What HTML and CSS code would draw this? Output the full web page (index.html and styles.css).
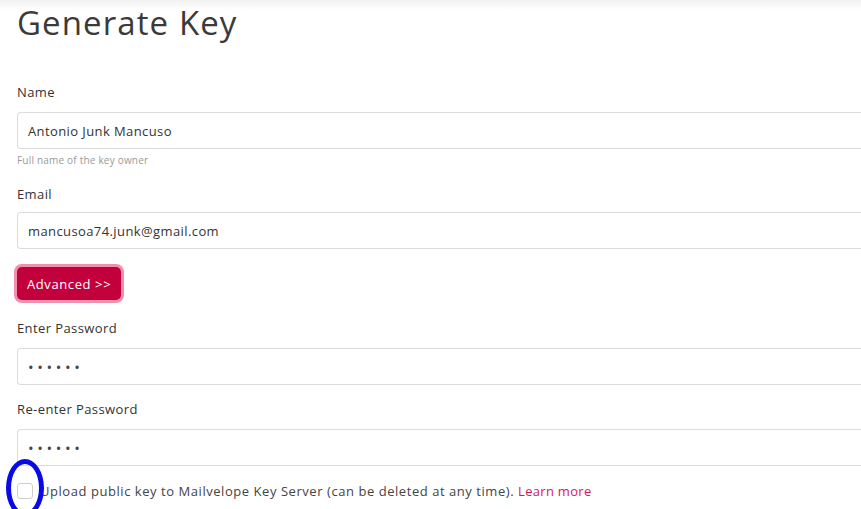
FILE: index.html
```html
<!DOCTYPE html>
<html>
<head>
<meta charset="utf-8">
<link rel="stylesheet" href="styles.css">
</head>
<body>
<div class="topshade"></div>
<main class="page">
  <h1 class="title">Generate Key</h1>
  <div class="field first">
    <label class="label">Name</label>
    <div class="input">Antonio Junk Mancuso</div>
    <div class="help">Full name of the key owner</div>
  </div>
  <div class="field email">
    <label class="label">Email</label>
    <div class="input">mancusoa74.junk@gmail.com</div>
  </div>
  <button class="btn">Advanced &gt;&gt;</button>
  <div class="field pw">
    <label class="label">Enter Password</label>
    <div class="input dots">••••••</div>
  </div>
  <div class="field pw2">
    <label class="label">Re-enter Password</label>
    <div class="input dots">••••••</div>
  </div>
  <div class="check-row">
    <span class="checkbox"></span>
    <span class="check-text">Upload public key to Mailvelope Key Server (can be deleted at any time). <a class="link">Learn more</a></span>
    <span class="annot"></span>
  </div>
</main>
</body>
</html>
```
FILE: styles.css
```css
html, body {
  margin: 0;
  padding: 0;
  background: #fff;
  overflow: hidden;
  width: 861px;
  height: 509px;
}
body {
  font-family: "Open Sans", "Liberation Sans", sans-serif;
  color: #333;
  position: relative;
}
.topshade {
  position: absolute;
  left: 0; top: 0; right: 0;
  height: 10px;
  background: linear-gradient(#f2f2f2, #fff);
}
.page {
  position: relative;
  padding-left: 17px;
}
.title {
  margin: 0;
  font-size: 33px;
  font-weight: 400;
  line-height: 46px;
  color: #3a3a3a;
  letter-spacing: 1.1px;
}
.field {
  display: flex;
  flex-direction: column;
}
.first { margin-top: 37px; }
.label {
  font-size: 13px;
  line-height: 18px;
  color: #333;
  letter-spacing: 0.4px;
  margin-bottom: 11px;
}
.email .label { margin-bottom: 9px; }
.input {
  box-sizing: border-box;
  height: 37px;
  border: 1px solid #dcdcdc;
  border-right: none;
  border-radius: 4px 0 0 4px;
  padding: 0 10px;
  display: flex;
  align-items: center;
  font-size: 13px;
  letter-spacing: 0.4px;
  color: #333;
  margin-bottom: 9px;
}
.help {
  font-size: 10px;
  color: #999;
  line-height: 14px;
  letter-spacing: 0.2px;
  margin-top: -5px;
  margin-bottom: 18px;
}
.btn {
  display: block;
  margin-top: 9px;
  height: 33px;
  padding: 0 10px;
  background: #c1003c;
  color: #fff;
  border: none;
  border-radius: 5px;
  box-shadow: 0 0 0 3px #f08fae;
  font-family: inherit;
  font-size: 13px;
  font-weight: 500;
  letter-spacing: 0.6px;
}
.pw { margin-top: 19px; }
.pw .input { margin-bottom: 15px; }
.pw2 .input { margin-bottom: 16px; }
.dots {
  font-size: 15px;
  letter-spacing: 3.6px;
  color: #444;
  padding-left: 10px;
}
.check-row {
  position: relative;
  display: flex;
  align-items: center;
  height: 18px;
}
.checkbox {
  width: 14px;
  height: 14px;
  border: 1px solid #cfcfcf;
  border-radius: 3px;
  margin-right: 7px;
  background: #fff;
}
.check-text {
  font-size: 13px;
  color: #444;
  letter-spacing: 0.55px;
}
.link { color: #d6185a; text-decoration: none; letter-spacing: 0.3px; }
.annot {
  position: absolute;
  left: -11px;
  top: -23px;
  width: 28px;
  height: 48px;
  border: 5px solid #0a0ae6;
  border-radius: 50%;
}
```
